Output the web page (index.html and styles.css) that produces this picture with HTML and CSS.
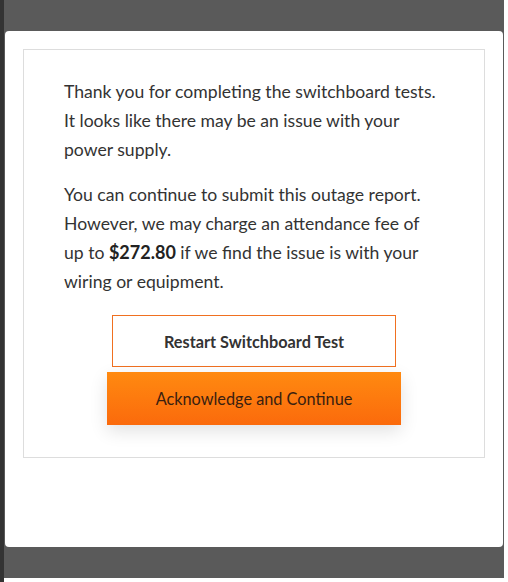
FILE: index.html
```html
<!DOCTYPE html>
<html>
<head>
<meta charset="utf-8">
<link rel="stylesheet" href="styles.css">
</head>
<body>
<div class="page">
  <div class="strip"></div>
  <div class="overlay">
    <div class="modal">
      <div class="panel">
        <p class="msg">Thank you for completing the switchboard tests. It looks like there may be an issue with your power supply.</p>
        <p class="msg">You can continue to submit this outage report. However, we may charge an attendance fee of up to <strong>$272.80</strong> if we find the issue is with your wiring or equipment.</p>
        <div class="actions">
          <button class="btn btn-outline">Restart Switchboard Test</button>
          <button class="btn btn-primary">Acknowledge and Continue</button>
        </div>
      </div>
    </div>
  </div>
</div>
</body>
</html>
```
FILE: styles.css
```css
html, body {
  margin: 0;
  padding: 0;
  background: #ffffff;
  font-family: Lato, "Liberation Sans", sans-serif;
}
.page {
  display: flex;
  height: 582px;
}
.strip {
  width: 4px;
  background: #333333;
  flex: none;
}
.overlay {
  width: 500px;
  height: 547px;
  background: #5a5a5a;
  padding-top: 31px;
  flex: none;
}
.modal {
  margin-left: 1px;
  width: 462px;
  height: 480px;
  padding: 18px;
  background: #ffffff;
  border-radius: 4px;
}
.panel {
  box-sizing: border-box;
  border: 1px solid #dddddd;
  height: 409px;
  padding: 27px 44px 0 40px;
}
.msg {
  margin: 0 0 16px 0;
  font-size: 17.6px;
  line-height: 29px;
  color: #333333;
}
.msg strong {
  font-weight: 700;
  font-size: 18px;
  color: #222222;
}
.actions {
  display: flex;
  flex-direction: column;
  align-items: center;
  gap: 5px;
  margin-top: 19px;
  margin-right: -4px;
}
.btn {
  font-family: Lato, "Liberation Sans", sans-serif;
  font-size: 16.3px;
  color: #333333;
  cursor: pointer;
  margin: 0;
}
.btn-outline {
  width: 284px;
  height: 52px;
  background: #ffffff;
  border: 1px solid #f07020;
  font-weight: 700;
}
.btn-primary {
  width: 294px;
  height: 53px;
  border: none;
  background: linear-gradient(#ff8a10, #fb6a0c);
  box-shadow: 0 6px 18px rgba(0, 0, 0, 0.12);
  color: #3a2010;
  font-weight: 400;
}
```
